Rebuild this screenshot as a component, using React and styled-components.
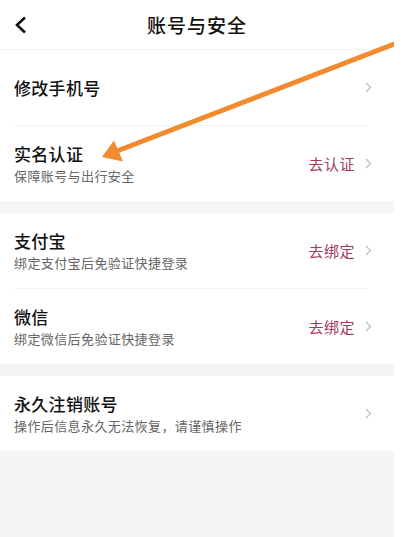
import React from "react";
import styled, { createGlobalStyle } from "styled-components";

const GlobalStyle = createGlobalStyle`
  html, body {
    margin: 0;
    padding: 0;
    background: #ffffff;
  }
  body {
    font-family: "Noto Sans CJK SC", "Noto Sans", sans-serif;
    color: #141414;
  }
`;

const Page = styled.div`
  position: relative;
  width: 394px;
  min-height: 537px;
  background: #f5f5f6;
  overflow: hidden;
`;

const Header = styled.header`
  display: grid;
  grid-template-columns: 60px 1fr 60px;
  align-items: center;
  height: 49px;
  background: #ffffff;
  border-bottom: 1px solid #f1f1f1;
`;

const BackButton = styled.button`
  display: flex;
  align-items: center;
  padding: 0 0 0 14px;
  border: 0;
  background: none;
  height: 100%;
`;

const Title = styled.h1`
  margin: 0;
  text-align: center;
  font-size: 19px;
  font-weight: 500;
  letter-spacing: 1px;
  color: #111;
`;

const Section = styled.section`
  background: #ffffff;
  margin-bottom: 12px;
`;

const Row = styled.div`
  display: flex;
  align-items: center;
  height: ${(p) => p.$height || 75}px;
  padding: 0 22px 0 14px;
`;

const Divider = styled.div`
  height: 1px;
  margin: 0 26px 0 14px;
  background: #f0f0f0;
`;

const Texts = styled.div`
  flex: 1;
  display: flex;
  flex-direction: column;
`;

const RowTitle = styled.div`
  font-size: 17px;
  font-weight: 500;
  line-height: 24px;
  letter-spacing: 0.3px;
  color: #111;
`;

const RowSub = styled.div`
  margin-top: 1px;
  font-size: 13px;
  line-height: 18px;
  letter-spacing: 0.4px;
  color: #666;
`;

const Action = styled.span`
  margin-right: 10px;
  font-size: 15px;
  letter-spacing: 0.5px;
  color: #a3375b;
`;

const ArrowLayer = styled.svg`
  position: absolute;
  top: 0;
  left: 0;
  pointer-events: none;
`;

const Chevron = () => (
  <svg width="7" height="11" viewBox="0 0 7 11">
    <polyline points="1,1 5.5,5.5 1,10" fill="none" stroke="#bdbdbd" strokeWidth="1.3" />
  </svg>
);

const Item = ({ title, sub, action, height }) => (
  <Row $height={height}>
    <Texts>
      <RowTitle>{title}</RowTitle>
      {sub && <RowSub>{sub}</RowSub>}
    </Texts>
    {action && <Action>{action}</Action>}
    <Chevron />
  </Row>
);

export default function App() {
  return (
    <>
      <GlobalStyle />
      <Page>
        <Header>
          <BackButton aria-label="返回">
            <svg width="14" height="18" viewBox="0 0 14 18">
              <polyline points="11,1.5 3,9 11,16.5" fill="none" stroke="#111" strokeWidth="2.6" />
            </svg>
          </BackButton>
          <Title>账号与安全</Title>
          <span />
        </Header>

        <Section>
          <Item title="修改手机号" />
          <Divider />
          <Item title="实名认证" sub="保障账号与出行安全" action="去认证" />
        </Section>

        <Section>
          <Item title="支付宝" sub="绑定支付宝后免验证快捷登录" action="去绑定" />
          <Divider />
          <Item title="微信" sub="绑定微信后免验证快捷登录" action="去绑定" />
        </Section>

        <Section>
          <Item title="永久注销账号" sub="操作后信息永久无法恢复，请谨慎操作" />
        </Section>

        <ArrowLayer width="394" height="200" viewBox="0 0 394 200">
          <line x1="402" y1="41" x2="117" y2="151" stroke="#f28a2e" strokeWidth="5" strokeLinecap="round" />
          <polygon points="102,157 114,140.5 123,161.5" fill="#f28a2e" />
        </ArrowLayer>
      </Page>
    </>
  );
}
